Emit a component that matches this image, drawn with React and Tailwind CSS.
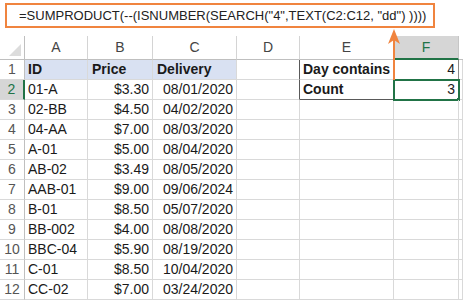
const rows = [
  ['01-A', '$3.30', '08/01/2020'],
  ['02-BB', '$4.50', '04/02/2020'],
  ['04-AA', '$7.00', '08/03/2020'],
  ['A-01', '$5.00', '08/04/2020'],
  ['AB-02', '$3.49', '08/05/2020'],
  ['AAB-01', '$9.00', '09/06/2024'],
  ['B-01', '$8.50', '05/07/2020'],
  ['BB-002', '$4.00', '08/08/2020'],
  ['BBC-04', '$5.90', '08/19/2020'],
  ['C-01', '$8.50', '10/04/2020'],
  ['CC-02', '$7.00', '03/24/2020'],
];

const cell = 'h-[20px] border-r border-b border-[#d9d9d9] flex items-center overflow-hidden whitespace-nowrap';

export default function App() {
  return (
    <div className="relative w-[463px] h-[300px] bg-white overflow-hidden text-[14px] text-[#1a1a1a]" style={{ fontFamily: '"Liberation Sans", Arial, sans-serif' }}>
      {/* formula bar */}
      <div className="h-[36px] pt-[3px] pl-[5px]">
        <div className="w-[430px] h-[25px] border-2 border-[#f0843f] flex items-center pl-[12px] text-[13px] whitespace-nowrap text-[#222]">
          =SUMPRODUCT(--(ISNUMBER(SEARCH("4",TEXT(C2:C12, "dd") ))))
        </div>
      </div>

      {/* sheet */}
      <div className="grid grid-cols-[25px_63px_65px_84px_63px_94px_65px_1fr] grid-rows-[24px_repeat(12,20px)]">
        {/* header row */}
        <div className="relative border-r border-b border-[#bfbfbf]">
          <div className="absolute right-[3px] bottom-[3px] w-0 h-0 border-l-[12px] border-l-transparent border-b-[12px] border-b-[#dcdcdc]" />
        </div>
        {['A', 'B', 'C', 'D', 'E'].map((c) => (
          <div key={c} className="flex items-center justify-center border-r border-b border-[#d4d4d4] border-b-[#bfbfbf] text-[#444]">{c}</div>
        ))}
        <div className="flex items-center justify-center bg-[#d6d6d6] border-r border-[#c6c6c6] border-b-2 border-b-[#217346] text-[#217346]">F</div>
        <div className="border-b border-[#bfbfbf]" />

        {/* row 1 */}
        <div className="h-[20px] flex items-center justify-center border-r border-b border-[#bfbfbf] border-b-[#d9d9d9] text-[#555]">1</div>
        <div className={`${cell} bg-[#d9e1f2] pl-[3px] font-bold`}>ID</div>
        <div className={`${cell} bg-[#d9e1f2] pl-[4px] font-bold`}>Price</div>
        <div className={`${cell} bg-[#d9e1f2] pl-[4px] font-bold`}>Delivery</div>
        <div className={`${cell} border-r-[#595959]`} />
        <div className={`${cell} pl-[3px] font-bold`}>Day contains</div>
        <div className={`${cell} justify-end pr-[3px] border-r-[#8a8a8a]`}>4</div>
        <div className={cell} />

        {rows.map((r, i) => {
          const n = i + 2;
          const sel = n === 2;
          return [
            <div key={`h${n}`} className={`h-[20px] flex items-center justify-center border-b border-[#d9d9d9] text-[#555] ${sel ? 'bg-[#d6d6d6] border-r-2 border-r-[#217346] text-[#217346]' : 'border-r border-r-[#bfbfbf]'}`}>{n}</div>,
            <div key={`a${n}`} className={`${cell} pl-[3px]`}>{r[0]}</div>,
            <div key={`b${n}`} className={`${cell} justify-end pr-[3px]`}>{r[1]}</div>,
            <div key={`c${n}`} className={`${cell} justify-end pr-[3px]`}>{r[2]}</div>,
            <div key={`d${n}`} className={`${cell} ${sel ? 'border-r-[#595959]' : ''}`} />,
            <div key={`e${n}`} className={`${cell} pl-[3px] font-bold ${sel ? 'border-b-[#595959]' : ''}`}>{sel ? 'Count' : ''}</div>,
            <div key={`f${n}`} className={`${cell} relative justify-end pr-[3px] ${sel ? 'outline-2 outline-[#217346] -outline-offset-1' : ''}`}>
              {sel ? '3' : ''}
              {sel && <div className="absolute right-[-4px] bottom-[-4px] w-[6px] h-[6px] bg-[#217346] border border-white" />}
            </div>,
            <div key={`g${n}`} className={cell} />,
          ];
        })}
      </div>

      {/* orange arrow pointing at the formula */}
      <svg className="absolute left-[386px] top-[28px]" width="16" height="54" viewBox="0 0 16 54">
        <line x1="8" y1="10" x2="8" y2="52" stroke="#f0843f" strokeWidth="2" />
        <path d="M8 1 L14 16 L8 12 L2 16 Z" fill="#f0843f" />
      </svg>
    </div>
  );
}
